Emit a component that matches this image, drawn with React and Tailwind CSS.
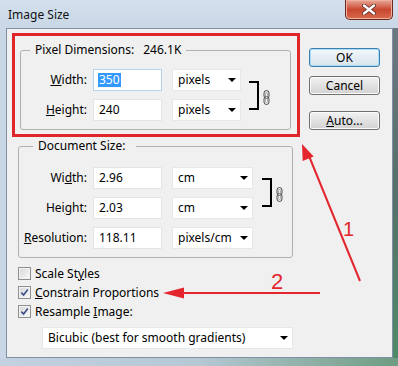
import React from "react";

const Tri = () => (
  <span className="w-0 h-0 border-l-[4px] border-r-[4px] border-t-[4px] border-l-transparent border-r-transparent border-t-black" />
);

const Select = ({ cls, children }) => (
  <div className={"flex h-[22px] items-center justify-between bg-white border border-[#e4e7eb] pl-[5px] pr-[4px] " + cls}>
    <span className="leading-none">{children}</span>
    <Tri />
  </div>
);

const Input = ({ children, focused }) => (
  <div
    className={
      "flex h-[22px] w-[69px] items-center bg-white border pl-[4px] " +
      (focused ? "border-[#b9d3ee]" : "border-[#e1e4e8]")
    }
  >
    {children}
  </div>
);

const Link = () => (
  <svg width="7" height="15" viewBox="0 0 7 15">
    <rect x="1" y="0.5" width="5" height="8" rx="2.5" fill="#e8e8e8" stroke="#505050" strokeWidth="1" />
    <rect x="1" y="6.5" width="5" height="8" rx="2.5" fill="none" stroke="#505050" strokeWidth="1" />
    <rect x="2.5" y="2.5" width="2" height="4" rx="1" fill="none" stroke="#909090" strokeWidth="0.7" />
    <rect x="2.5" y="8.5" width="2" height="4" rx="1" fill="none" stroke="#909090" strokeWidth="0.7" />
  </svg>
);

const Bracket = () => <div className="h-[29px] w-[10px] border-y-2 border-r-2 border-black" />;

const Check = ({ checked, children }) => (
  <div className="flex h-[19px] items-center">
    <span className="ml-[6px] flex h-[13px] w-[13px] items-center justify-center border border-[#8e8f8f] bg-linear-to-br from-[#d6d6d6] to-[#fbfbfb] shadow-[inset_0_0_0_1px_#f3f3f3]">
      {checked && (
        <svg width="9" height="9" viewBox="0 0 9 9">
          <path d="M1.3 4.6 L3.6 7 L7.8 1.6" fill="none" stroke="#3b4f86" strokeWidth="1.6" />
        </svg>
      )}
    </span>
    <span className="ml-[4px] leading-none">{children}</span>
  </div>
);

const Btn = ({ children, def, cls }) => (
  <div
    className={
      "flex h-[19px] w-[71px] items-center justify-center rounded-[3px] border leading-none " +
      (def
        ? "border-[#3c7fb1] bg-linear-to-b from-[#f3f8fb] to-[#d7e3eb] shadow-[inset_0_0_0_1px_#a9dcf5] "
        : "border-[#707070] bg-linear-to-b from-[#f2f2f2] to-[#d2d2d2] shadow-[inset_0_0_0_1px_#fbfbfb] ") +
      (cls || "")
    }
  >
    {children}
  </div>
);

export default function App() {
  return (
    <div className="relative h-[366px] w-[398px] overflow-hidden bg-[#c8d6e5] font-['Noto_Sans',sans-serif] text-[12px] text-black">
      {/* title bar */}
      <div className="flex h-[28px] items-start bg-linear-to-b from-[#d3dfec] to-[#c9d7e6]">
        <div className="pl-[8px] pt-[8px] leading-[14px] text-[#111]">Image Size</div>
        <div className="ml-auto mr-[5px] flex h-[20px] w-[48px] items-center justify-center rounded-b-[5px] border border-t-0 border-[#6b2a1e] bg-linear-to-b from-[#e9a899] via-[#c8472f] to-[#d86a4c] shadow-[inset_0_0_0_1px_#f0b0a0]">
          <svg width="14" height="11" viewBox="0 0 14 11">
            <path d="M2 1.5 L12 9.5 M12 1.5 L2 9.5" stroke="#5a2a22" strokeWidth="4" strokeLinecap="round" />
            <path d="M2 1.5 L12 9.5 M12 1.5 L2 9.5" stroke="#ffffff" strokeWidth="2.4" strokeLinecap="round" />
          </svg>
        </div>
      </div>

      <div className="flex h-[330px]">
        <div className="w-[6px]" />
        {/* client */}
        <div className="flex w-[387px] border border-[#7f90a5] bg-[#f0f0f0]">
          {/* left column */}
          <div className="flex w-[293px] flex-col pl-[5px] pt-[4px]">
            {/* red annotation box */}
            <div className="h-[104px] w-[288px] border-[3px] border-[#e0262b] pl-[5px] pt-[6px]">
              <fieldset className="w-[271px] rounded-[3px] border border-[#b0b0b0] pb-[8px]">
                <legend className="ml-[9px] px-[5px] leading-[16px]">
                  Pixel Dimensions:<span className="ml-[9px]">246.1K</span>
                </legend>
                <div className="mt-[11px] flex items-center">
                  <div className="flex flex-col gap-[8px]">
                    <div className="flex items-center">
                      <div className="w-[66px] text-right">
                        <u>W</u>idth:
                      </div>
                      <div className="ml-[6px]">
                        <Input focused>
                          <span className="bg-[#3399ff] px-[1px] leading-[14px] text-white">350</span>
                        </Input>
                      </div>
                      <Select cls="ml-[10px] w-[69px]">pixels</Select>
                    </div>
                    <div className="flex items-center">
                      <div className="w-[66px] text-right">
                        <u>H</u>eight:
                      </div>
                      <div className="ml-[6px]">
                        <Input>
                          <span className="px-[1px]">240</span>
                        </Input>
                      </div>
                      <Select cls="ml-[10px] w-[69px]">pixels</Select>
                    </div>
                  </div>
                  <div className="ml-[8px]">
                    <Bracket />
                  </div>
                  <div className="ml-[4px] mt-[4px]">
                    <Link />
                  </div>
                </div>
              </fieldset>
            </div>

            {/* document size */}
            <fieldset className="ml-[6px] mt-[1px] w-[275px] rounded-[3px] border border-[#b0b0b0] pb-[8px]">
              <legend className="ml-[14px] pl-[5px] pr-[11px] leading-[16px]">Document Size:</legend>
              <div className="mt-[13px] flex items-start">
                <div className="flex flex-col gap-[8px]">
                  <div className="flex items-center">
                    <div className="w-[68px] text-right">
                      Wi<u>d</u>th:
                    </div>
                    <div className="ml-[6px]">
                      <Input>
                        <span className="px-[1px]">2.96</span>
                      </Input>
                    </div>
                    <Select cls="ml-[10px] w-[81px]">cm</Select>
                  </div>
                  <div className="flex items-center">
                    <div className="w-[68px] text-right">
                      Hei<u>g</u>ht:
                    </div>
                    <div className="ml-[6px]">
                      <Input>
                        <span className="px-[1px]">2.03</span>
                      </Input>
                    </div>
                    <Select cls="ml-[10px] w-[81px]">cm</Select>
                  </div>
                  <div className="flex items-center">
                    <div className="w-[68px] text-right">
                      <u>R</u>esolution:
                    </div>
                    <div className="ml-[6px]">
                      <Input>
                        <span className="px-[1px]">118.11</span>
                      </Input>
                    </div>
                    <Select cls="ml-[10px] w-[81px]">pixels/cm</Select>
                  </div>
                </div>
                <div className="ml-[9px] mt-[11px]">
                  <Bracket />
                </div>
                <div className="ml-[4px] mt-[20px]">
                  <Link />
                </div>
              </div>
            </fieldset>

            {/* checkboxes */}
            <div className="mt-[6px] flex flex-col">
              <Check>
                Scale St<u>y</u>les
              </Check>
              <Check checked>
                <u>C</u>onstrain Proportions
              </Check>
              <Check checked>
                Resample <u>I</u>mage:
              </Check>
            </div>
            <Select cls="ml-[30px] mt-[6px] w-[251px]">Bicubic (best for smooth gradients)</Select>
          </div>

          {/* right column buttons */}
          <div className="ml-[9px] flex flex-col pt-[19px]">
            <Btn def>OK</Btn>
            <Btn cls="mt-[9px]">Cancel</Btn>
            <Btn cls="mt-[16px]">
              <span>
                <u>A</u>uto...
              </span>
            </Btn>
          </div>
        </div>
        <div className="w-[5px] bg-linear-to-b from-[#6d7780] via-[#56706a] to-[#4f8a68]" />
      </div>
      <div className="h-[8px] bg-linear-to-r from-[#c3d1e0] via-[#b5c8d4] to-[#6f9c82]" />

      {/* annotation arrows */}
      <svg className="pointer-events-none absolute left-0 top-0" width="398" height="366" viewBox="0 0 398 366">
        <line x1="360" y1="281" x2="309" y2="156" stroke="#e3262d" strokeWidth="2" />
        <polygon points="302,144 302.7,161 313.7,156.4" fill="#e3262d" />
        <line x1="180" y1="293" x2="320" y2="293" stroke="#e3262d" strokeWidth="2" />
        <polygon points="163,293 184,287.5 184,298.5" fill="#e3262d" />
        <text x="343" y="236" fill="#e3262d" fontSize="20" fontFamily="'Liberation Sans', Arial, sans-serif">1</text>
        <text x="271" y="289" fill="#e3262d" fontSize="22" fontFamily="'Liberation Sans', Arial, sans-serif">2</text>
      </svg>
    </div>
  );
}
